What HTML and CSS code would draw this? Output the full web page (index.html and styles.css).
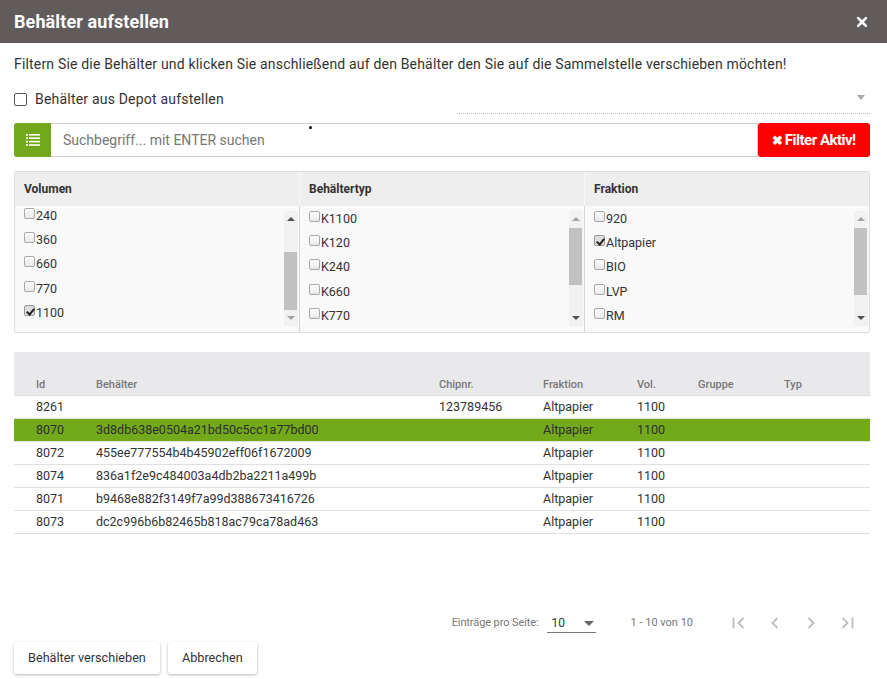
FILE: index.html
```html
<!DOCTYPE html>
<html lang="de">
<head>
<meta charset="utf-8">
<title>Behälter aufstellen</title>
<link rel="stylesheet" href="styles.css">
</head>
<body>
<div class="dialog">
  <header class="titlebar">
    <h1 class="title">Behälter aufstellen</h1>
    <span class="close">
      <svg width="10" height="10" viewBox="0 0 10 10"><path d="M1 1L9 9M9 1L1 9" stroke="#fff" stroke-width="2.6" stroke-linecap="square"/></svg>
    </span>
  </header>

  <div class="content">
    <p class="intro">Filtern Sie die Behälter und klicken Sie anschließend auf den Behälter den Sie auf die Sammelstelle verschieben möchten!</p>

    <div class="depot-row">
      <label class="depot-check"><span class="big-box"></span>Behälter aus Depot aufstellen</label>
      <div class="dotted-select"><span class="tri-small"></span></div>
    </div>

    <div class="search">
      <button class="menu-btn" type="button">
        <svg width="14" height="12" viewBox="0 0 14 12">
          <g fill="#fff">
            <rect x="0" y="0" width="2" height="1.6"/><rect x="3" y="0" width="11" height="1.6"/>
            <rect x="0" y="3.4" width="2" height="1.6"/><rect x="3" y="3.4" width="11" height="1.6"/>
            <rect x="0" y="6.8" width="2" height="1.6"/><rect x="3" y="6.8" width="11" height="1.6"/>
            <rect x="0" y="10.2" width="2" height="1.6"/><rect x="3" y="10.2" width="11" height="1.6"/>
          </g>
        </svg>
      </button>
      <div class="search-input"><span class="placeholder">Suchbegriff... mit ENTER suchen</span><span class="cursor-dot"></span></div>
      <button class="filter-btn" type="button"><span class="x">✖</span>Filter Aktiv!</button>
    </div>

    <div class="filters">
      <div class="fcol">
        <div class="fhead">Volumen</div>
        <div class="fbody">
          <ul class="flist shifted">
            <li><span class="cb"></span>240</li>
            <li><span class="cb"></span>360</li>
            <li><span class="cb"></span>660</li>
            <li><span class="cb"></span>770</li>
            <li><span class="cb checked"></span>1100</li>
          </ul>
          <div class="sbar">
            <span class="arr up dark"></span>
            <div class="trough"><div class="thumb t1"></div></div>
            <span class="arr down"></span>
          </div>
        </div>
      </div>
      <div class="fcol">
        <div class="fhead">Behältertyp</div>
        <div class="fbody">
          <ul class="flist">
            <li><span class="cb"></span>K1100</li>
            <li><span class="cb"></span>K120</li>
            <li><span class="cb"></span>K240</li>
            <li><span class="cb"></span>K660</li>
            <li><span class="cb"></span>K770</li>
          </ul>
          <div class="sbar">
            <span class="arr up"></span>
            <div class="trough"><div class="thumb t2"></div></div>
            <span class="arr down dark"></span>
          </div>
        </div>
      </div>
      <div class="fcol">
        <div class="fhead">Fraktion</div>
        <div class="fbody">
          <ul class="flist">
            <li><span class="cb"></span>920</li>
            <li><span class="cb checked"></span>Altpapier</li>
            <li><span class="cb"></span>BIO</li>
            <li><span class="cb"></span>LVP</li>
            <li><span class="cb"></span>RM</li>
          </ul>
          <div class="sbar">
            <span class="arr up"></span>
            <div class="trough"><div class="thumb t3"></div></div>
            <span class="arr down dark"></span>
          </div>
        </div>
      </div>
    </div>

    <table class="grid">
      <colgroup>
        <col class="c-id"><col class="c-beh"><col class="c-chip"><col class="c-frak"><col class="c-vol"><col class="c-grp"><col class="c-typ">
      </colgroup>
      <thead>
        <tr><th>Id</th><th>Behälter</th><th>Chipnr.</th><th>Fraktion</th><th>Vol.</th><th>Gruppe</th><th>Typ</th></tr>
      </thead>
      <tbody>
        <tr><td>8261</td><td></td><td>123789456</td><td>Altpapier</td><td>1100</td><td></td><td></td></tr>
        <tr class="selected"><td>8070</td><td>3d8db638e0504a21bd50c5cc1a77bd00</td><td></td><td>Altpapier</td><td>1100</td><td></td><td></td></tr>
        <tr><td>8072</td><td>455ee777554b4b45902eff06f1672009</td><td></td><td>Altpapier</td><td>1100</td><td></td><td></td></tr>
        <tr><td>8074</td><td>836a1f2e9c484003a4db2ba2211a499b</td><td></td><td>Altpapier</td><td>1100</td><td></td><td></td></tr>
        <tr><td>8071</td><td>b9468e882f3149f7a99d388673416726</td><td></td><td>Altpapier</td><td>1100</td><td></td><td></td></tr>
        <tr><td>8073</td><td>dc2c996b6b82465b818ac79ca78ad463</td><td></td><td>Altpapier</td><td>1100</td><td></td><td></td></tr>
      </tbody>
    </table>

    <div class="pager">
      <span class="pg-label">Einträge pro Seite:</span>
      <div class="pg-select"><span>10</span><span class="tri-pg"></span></div>
      <span class="pg-range">1 - 10 von 10</span>
      <div class="pg-btns">
        <span class="pg-btn"><svg width="14" height="14" viewBox="0 0 14 14"><path d="M1.5 1.5V12.5M11.5 2L6.5 7L11.5 12" fill="none" stroke="#bdbdbd" stroke-width="1.8"/></svg></span>
        <span class="pg-btn"><svg width="14" height="14" viewBox="0 0 14 14"><path d="M9.5 2L4.5 7L9.5 12" fill="none" stroke="#bdbdbd" stroke-width="1.8"/></svg></span>
        <span class="pg-btn"><svg width="14" height="14" viewBox="0 0 14 14"><path d="M4.5 2L9.5 7L4.5 12" fill="none" stroke="#bdbdbd" stroke-width="1.8"/></svg></span>
        <span class="pg-btn"><svg width="14" height="14" viewBox="0 0 14 14"><path d="M2.5 2L7.5 7L2.5 12M12.5 1.5V12.5" fill="none" stroke="#bdbdbd" stroke-width="1.8"/></svg></span>
      </div>
    </div>

    <div class="actions">
      <button class="act-btn" type="button">Behälter verschieben</button>
      <button class="act-btn" type="button">Abbrechen</button>
    </div>
  </div>
</div>
</body>
</html>
```

FILE: styles.css
```css
* { box-sizing: border-box; }
html, body { margin: 0; padding: 0; background: #fff; }
body { font-family: Roboto, "Liberation Sans", Arial, sans-serif; color: #333; width: 887px; height: 679px; overflow: hidden; }

.titlebar {
  height: 43px;
  background: #625b5b;
  display: flex;
  align-items: center;
  justify-content: space-between;
  padding: 0 20px 0 14px;
}
.title {
  margin: 0;
  font-size: 18px;
  font-weight: 700;
  color: #fff;
  letter-spacing: 0.1px;
}
.close { display: flex; align-items: center; }

.content { padding: 0 17px 0 14px; }

.intro {
  margin: 11px 0 0;
  font-size: 14px;
  line-height: 20px;
  color: #333;
  letter-spacing: 0.18px;
  white-space: nowrap;
}

.depot-row {
  margin-top: 15px;
  height: 20px;
  display: flex;
  align-items: center;
  justify-content: space-between;
}
.depot-check {
  display: flex;
  align-items: center;
  font-size: 14px;
  color: #333;
  letter-spacing: 0.2px;
}
.big-box {
  width: 13px;
  height: 13px;
  border: 1.5px solid #555;
  border-radius: 2px;
  margin-right: 8px;
}
.dotted-select {
  width: 413px;
  height: 20px;
  border-bottom: 1px dotted #bbb;
  margin-top: 10px;
  display: flex;
  justify-content: flex-end;
  align-items: flex-start;
  padding: 1px 5px 0 0;
}
.tri-small {
  width: 0; height: 0;
  border-left: 4px solid transparent;
  border-right: 4px solid transparent;
  border-top: 5px solid #aaa;
}

.search {
  margin-top: 14px;
  height: 34px;
  display: flex;
}
.menu-btn {
  width: 37px;
  height: 34px;
  border: 0;
  margin: 0;
  padding: 0;
  background: #72a81c;
  border-radius: 3px 0 0 3px;
  display: flex;
  align-items: center;
  justify-content: center;
}
.search-input {
  flex: 1;
  position: relative;
  border: 1px solid #ccc;
  border-left: 0;
  display: flex;
  align-items: center;
  padding-left: 12px;
}
.placeholder { font-size: 14px; color: #777; }
.cursor-dot {
  position: absolute;
  left: 258px;
  top: 2px;
  width: 3px;
  height: 3px;
  border-radius: 50%;
  background: #000;
}
.filter-btn {
  width: 112px;
  height: 34px;
  margin: 0;
  border: 0;
  border-radius: 3px;
  background: #ff0000;
  color: #fff;
  font-family: Roboto, "Liberation Sans", sans-serif;
  font-weight: 700;
  font-size: 15px;
  letter-spacing: -0.5px;
  display: flex;
  align-items: center;
  justify-content: center;
  padding: 0;
}
.filter-btn .x { font-size: 13px; margin-right: 2px; }

.filters {
  margin-top: 14px;
  height: 162px;
  display: flex;
  border: 1px solid #ddd;
  border-radius: 2px;
  background: #f9f9f9;
}
.fcol { display: flex; flex-direction: column; }
.fcol:nth-child(1) { width: 284px; }
.fcol:nth-child(2) { width: 285px; }
.fcol:nth-child(3) { flex: 1; }
.fhead {
  height: 34px;
  background: #eeeeee;
  font-size: 12px;
  font-weight: 700;
  color: #333;
  display: flex;
  align-items: center;
  padding-left: 9px;
}
.fcol + .fcol .fhead { border-left: 1px solid #f6f6f6; padding-left: 9px; }
.fbody {
  flex: 1;
  display: flex;
  overflow: hidden;
}
.fcol + .fcol .fbody { border-left: 1px solid #d6d6d6; }
.flist {
  flex: 1;
  list-style: none;
  margin: 0;
  padding: 0 0 0 9px;
}
.fcol + .fcol .flist { padding-left: 9px; }
.flist.shifted { margin-top: -3px; }
.flist li {
  height: 24.3px;
  display: flex;
  align-items: center;
  font-size: 12.5px;
  color: #333;
}
.cb {
  width: 11px;
  height: 11px;
  border: 1px solid #a9a9a9;
  border-radius: 2px;
  background: linear-gradient(#fcfcfc, #e8e8e8);
  margin-right: 1px;
  position: relative;
  top: -2px;
}
.cb.checked { background: #ddd; border-color: #999; }
.cb.checked::after {
  content: "";
  position: absolute;
  left: 3px;
  top: 1px;
  width: 3px;
  height: 6px;
  border: solid #222;
  border-width: 0 2px 2px 0;
  transform: rotate(40deg);
}

.sbar {
  width: 14px;
  margin: 5px 1px 6px 0;
  background: #f1f1f1;
  display: flex;
  flex-direction: column;
  align-items: center;
}
.arr {
  height: 16px;
  width: 14px;
  display: flex;
  align-items: center;
  justify-content: center;
}
.arr::before {
  content: "";
  width: 0; height: 0;
  border-left: 4px solid transparent;
  border-right: 4px solid transparent;
}
.arr.up::before { border-bottom: 4px solid #a3a3a3; }
.arr.down::before { border-top: 4px solid #a3a3a3; }
.arr.up.dark::before { border-bottom-color: #505050; }
.arr.down.dark::before { border-top-color: #505050; }
.trough { flex: 1; width: 100%; display: flex; flex-direction: column; }
.thumb { width: 13px; background: #c1c1c1; }
.t1 { margin-top: auto; height: 58px; }
.t2 { margin-top: 1px; height: 57px; }
.t3 { margin-top: 1px; height: 67px; }

.grid {
  margin-top: 19px;
  width: 856px;
  border-collapse: collapse;
  table-layout: fixed;
}
.c-id { width: 82px; }
.c-beh { width: 343px; }
.c-chip { width: 104px; }
.c-frak { width: 94px; }
.c-vol { width: 61px; }
.c-grp { width: 86px; }
.c-typ { width: 86px; }
.grid thead tr { background: #e9e9eb; height: 43px; }
.grid th {
  text-align: left;
  vertical-align: bottom;
  padding: 0 0 4px;
  font-size: 11px;
  font-weight: 500;
  color: #777;
  border-bottom: 1px solid #dedede;
}
.grid th:first-child, .grid td:first-child { padding-left: 22px; }
.grid td {
  height: 23px;
  padding: 0;
  font-size: 12.5px;
  color: #333;
  border-bottom: 1px solid #e0e0e0;
  white-space: nowrap;
}
.grid tr.selected td { background: #73aa1c; color: #2d2d2d; }

.pager {
  margin-top: 76px;
  height: 26px;
  display: flex;
  align-items: center;
  justify-content: flex-end;
  padding-right: 5px;
}
.pg-label { font-size: 11px; color: #777; margin-right: 8px; letter-spacing: -0.1px; }
.pg-select {
  width: 49px;
  height: 20px;
  border-bottom: 1px solid #777;
  display: flex;
  align-items: center;
  justify-content: space-between;
  padding: 2px 2px 0 5px;
  font-size: 12px;
  color: #333;
}
.tri-pg {
  width: 0; height: 0;
  border-left: 5px solid transparent;
  border-right: 5px solid transparent;
  border-top: 5px solid #666;
}
.pg-range { margin-left: 35px; margin-right: 28px; font-size: 11px; color: #777; }
.pg-btns { display: flex; }
.pg-btn { width: 36px; height: 26px; display: flex; align-items: center; justify-content: center; }

.actions {
  margin-top: 6px;
  display: flex;
  gap: 8px;
}
.act-btn {
  height: 32px;
  margin: 0;
  padding: 0 14px;
  border: 0;
  border-radius: 3px;
  background: #fff;
  font-family: Roboto, "Liberation Sans", sans-serif;
  font-size: 12.7px;
  color: #333;
  box-shadow: 0 1px 3px rgba(0,0,0,0.3);
}
```
